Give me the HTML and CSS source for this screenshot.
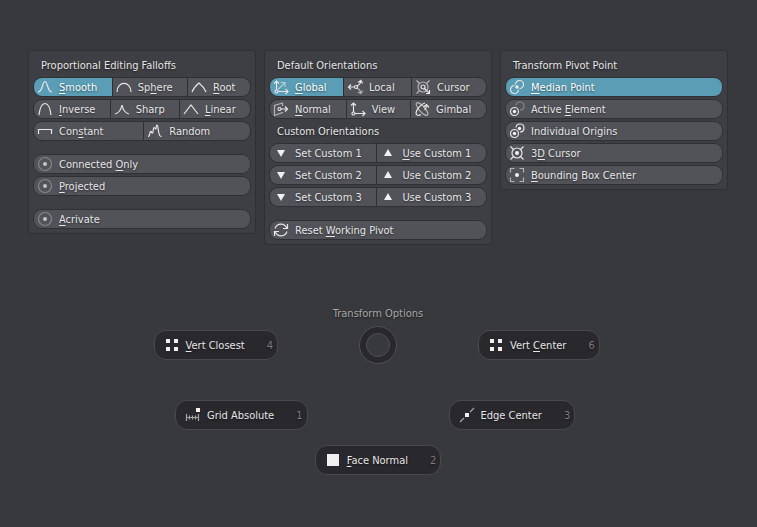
FILE: index.html
```html
<!DOCTYPE html>
<html lang="en">
<head>
    <meta charset="UTF-8">
    <meta name="viewport" content="width=device-width, initial-scale=1.0">
    <title>Transform Options</title>
    <link rel="stylesheet" href="styles.css">
</head>
<body>
    <main class="panels">
        <section class="panel">
            <h2>Proportional Editing Falloffs</h2>
            <div class="row">
                <button class="active"><svg class="icon" viewBox="0 0 16 16"><path d="M1 13C6 13 5 2.500 8 2.500S10 13 15 13"/></svg><span><u>S</u>mooth</span></button>
                <button><svg class="icon" viewBox="0 0 16 16"><path d="M1 13C1 1.500 15 1.500 15 13"/></svg><span>Sp<u>h</u>ere</span></button>
                <button><svg class="icon" viewBox="0 0 16 16"><path d="M1 13C2.500 9 5 6.500 8 4c3 2.500 5.500 5 7 9"/></svg><span><u>R</u>oot</span></button>
            </div>
            <div class="row">
                <button><svg class="icon" viewBox="0 0 16 16"><path d="M2 14C3 6 5 2.500 8 2.500s5 3.500 6 11.500"/></svg><span><u>I</u>nverse</span></button>
                <button><svg class="icon" viewBox="0 0 16 16"><path d="M1 13C5 12 7 9 8 4c1 5 3 8 7 9"/></svg><span>Sharp</span></button>
                <button><svg class="icon" viewBox="0 0 16 16"><path d="M1 13l7-9 7 9"/></svg><span><u>L</u>inear</span></button>
            </div>
            <div class="row">
                <button><svg class="icon" viewBox="0 0 16 16"><path d="M1.500 11V6.500h13V11"/></svg><span>Con<u>s</u>tant</span></button>
                <button><svg class="icon" viewBox="0 0 16 16"><path d="M1 13.500c2 0 1.500-4 2.500-5s1 2 2 1.500S6 4.500 7 4.500 8.500 7 9 5.500s0-3.500 1-3.500 1 3.500 1.500 6.500 1 5 3 5"/></svg><span>Random</span></button>
            </div>
            <div class="row spaced">
                <button><svg class="icon" viewBox="0 0 16 16"><circle class="dim" cx="8" cy="8" r="6.500"/><circle class="fill soft" cx="8" cy="8" r="2"/></svg><span>Connected <u>O</u>nly</span></button>
            </div>
            <div class="row">
                <button><svg class="icon" viewBox="0 0 16 16"><circle class="dim" cx="8" cy="8" r="6.500"/><circle class="fill soft" cx="8" cy="8" r="2"/></svg><span><u>P</u>rojected</span></button>
            </div>
            <div class="row spaced">
                <button><svg class="icon" viewBox="0 0 16 16"><circle class="dim" cx="8" cy="8" r="6.500"/><circle class="fill soft" cx="8" cy="8" r="2"/></svg><span><u>A</u>crivate</span></button>
            </div>
        </section>

        <section class="panel">
            <h2>Default Orientations</h2>
            <div class="row">
                <button class="active"><svg class="icon" viewBox="0 0 16 16"><path class="mid" d="M5 10.500L11.500 4M7.500 3.500H12V8"/><circle cx="3.500" cy="12.500" r="1.500"/><path d="M3.500 11V2M1 4.500L3.500 2 6 4.500M5 12.500h10M12.500 10l2.500 2.500-2.500 2.500"/></svg><span><u>G</u>lobal</span></button>
                <button><svg class="icon" viewBox="0 0 16 16"><path d="M7.500 8H1.500M4 5.500L1.500 8 4 10.500"/><circle cx="9" cy="8" r="1.500"/><path d="M10 7c2-1 3.500-2.500 4-5M11 3.500L14 1.500l1.500 3"/><path class="mid" d="M10 9c2 1 3.500 2.500 4 5M11 13l3 1.500 1.500-3"/></svg><span>Local</span></button>
                <button><svg class="icon" viewBox="0 0 16 16"><g class="mid"><circle cx="8" cy="8" r="5"/><path d="M1.500 1.500l3 3M14.500 1.500l-3 3M1.500 14.500l3-3"/></g><circle cx="8" cy="8" r="2"/><path d="M9.500 9.500l5 5M11 14.500h3.500V11"/></svg><span>Cursor</span></button>
            </div>
            <div class="row">
                <button><svg class="icon" viewBox="0 0 16 16"><path class="mid" d="M9.500 5V2L1.500 4.500v10l8-3V11"/><circle cx="6.500" cy="8" r="1.500"/><path d="M8 8h6.500M12 5.500L14.500 8 12 10.500"/></svg><span><u>N</u>ormal</span></button>
                <button><svg class="icon" viewBox="0 0 16 16"><circle cx="3.500" cy="12.500" r="1.500"/><path d="M3.500 11V2M1 4.500L3.500 2 6 4.500M5 12.500h10M12.500 10l2.500 2.500-2.500 2.500"/></svg><span>View</span></button>
                <button><svg class="icon" viewBox="0 0 16 16"><ellipse class="mid" cx="8" cy="8" rx="2.800" ry="8" transform="rotate(-42 8 8)"/><path d="M7 13.500C4.500 15 2 14.500 2 12 2 8.500 7 3 11 2"/><path d="M10.500 9c1.500-1.500 2-3 2-5M9.500 6l3-2.500 2.500 3"/></svg><span>Gimbal</span></button>
            </div>
            <h2>Custom Orientations</h2>
            <div class="row">
                <button><svg class="icon" viewBox="0 0 16 16"><path class="fill" d="M4 5h8l-4 7z"/></svg><span>Set Custom 1</span></button>
                <button><svg class="icon" viewBox="0 0 16 16"><path class="fill" d="M4 11h8L8 4z"/></svg><span><u>U</u>se Custom 1</span></button>
            </div>
            <div class="row">
                <button><svg class="icon" viewBox="0 0 16 16"><path class="fill" d="M4 5h8l-4 7z"/></svg><span>Set Custom 2</span></button>
                <button><svg class="icon" viewBox="0 0 16 16"><path class="fill" d="M4 11h8L8 4z"/></svg><span>Use Custom 2</span></button>
            </div>
            <div class="row">
                <button><svg class="icon" viewBox="0 0 16 16"><path class="fill" d="M4 5h8l-4 7z"/></svg><span>Set Custom 3</span></button>
                <button><svg class="icon" viewBox="0 0 16 16"><path class="fill" d="M4 11h8L8 4z"/></svg><span>Use Custom 3</span></button>
            </div>
            <div class="row spaced">
                <button><svg class="icon" viewBox="0 0 16 16"><path d="M2 6.500C4 1 11.500.500 14 6.500M14.500 2v4.500H10M14 9.500C12 15 4.500 15.500 2 9.500M1.500 14V9.500H6"/></svg><span>Reset <u>W</u>orking Pivot</span></button>
            </div>
        </section>

        <section class="panel">
            <h2>Transform Pivot Point</h2>
            <div class="row">
                <button class="active"><svg class="icon" viewBox="0 0 16 16"><path d="M6.500 5.500a4 4 0 1 1 4 4M9.500 10.500a4 4 0 1 1-4-4"/><circle class="fill" cx="8" cy="8" r="1.700"/></svg><span><u>M</u>edian Point</span></button>
            </div>
            <div class="row">
                <button><svg class="icon" viewBox="0 0 16 16"><path class="dim" d="M7 4.500a4 4 0 1 1 4 4.500"/><circle cx="5.500" cy="10.500" r="4"/><circle class="fill" cx="5.500" cy="10.500" r="1.700"/></svg><span>Active <u>E</u>lement</span></button>
            </div>
            <div class="row">
                <button><svg class="icon" viewBox="0 0 16 16"><path d="M7 4.500a4 4 0 1 1 4 4.500"/><circle cx="5.500" cy="10.500" r="4"/><circle class="fill" cx="5.500" cy="10.500" r="1.700"/><circle class="fill" cx="10.500" cy="5.500" r="1.700"/></svg><span>Individual Origins</span></button>
            </div>
            <div class="row">
                <button><svg class="icon" viewBox="0 0 16 16"><circle cx="8" cy="8" r="5"/><circle class="fill" cx="8" cy="8" r="2"/><path d="M1.500 1.500l3 3M14.500 1.500l-3 3M1.500 14.500l3-3M14.500 14.500l-3-3"/></svg><span>3<u>D</u> Cursor</span></button>
            </div>
            <div class="row">
                <button><svg class="icon" viewBox="0 0 16 16"><path class="mid" d="M5.500 1.500h-4v4M10.500 1.500h4v4M5.500 14.500h-4v-4M10.500 14.500h4v-4"/><circle class="fill" cx="8" cy="8" r="2"/></svg><span><u>B</u>ounding Box Center</span></button>
            </div>
        </section>
    </main>

    <nav class="pie">
        <h2>Transform Options</h2>
        <div class="pie-middle">
            <button><svg class="icon" viewBox="0 0 16 16"><path class="fill" d="M2 2h4v4H2zM10 2h4v4h-4zM2 10h4v4H2zM10 10h4v4h-4z"/></svg><span><u>V</u>ert Closest</span><kbd>4</kbd></button>
            <div class="ring"></div>
            <button><svg class="icon" viewBox="0 0 16 16"><path class="fill" d="M2 2h4v4H2zM10 2h4v4h-4zM2 10h4v4H2zM10 10h4v4h-4z"/></svg><span>Vert <u>C</u>enter</span><kbd>6</kbd></button>
        </div>
        <div class="pie-lower">
            <button><svg class="icon" viewBox="0 0 16 16"><path class="mid" d="M1.500 7v7M13.500 7v7M4.500 8.500v4M7.500 8.500v4M10.500 8.500v4M1.500 10.500h12"/><path class="fill" d="M11 1h4v4h-4z"/></svg><span>Grid Absolute</span><kbd>1</kbd></button>
            <button><svg class="icon" viewBox="0 0 16 16"><path class="mid" d="M1 15l4-4M11 5l4-4"/><path class="fill" d="M6 6h4v4H6z"/></svg><span>Edge Center</span><kbd>3</kbd></button>
        </div>
        <div class="pie-bottom">
            <button><svg class="icon" viewBox="0 0 16 16"><path class="fill" d="M2 2h12v12H2z"/></svg><span><u>F</u>ace Normal</span><kbd>2</kbd></button>
        </div>
    </nav>
</body>
</html>
```
FILE: styles.css
```css
* {
    box-sizing: border-box;
}
body {
    margin: 0;
    background-color: #38393c;
    color: #e6e6e6;
    font-family: "DejaVu Sans Condensed", "DejaVu Sans", sans-serif;
    font-size: 11px;
    line-height: 18px;
}
h2 {
    margin: 0;
    font-size: 11px;
    font-weight: normal;
    text-shadow: 0 1px 2px rgba(0, 0, 0, 0.6);
}
button {
    display: flex;
    align-items: center;
    margin: 0;
    color: inherit;
    font: inherit;
    text-align: left;
    white-space: nowrap;
    text-shadow: 0 1px 2px rgba(0, 0, 0, 0.5);
    cursor: pointer;
}
button span,
button kbd {
    padding-top: 1px;
}
u {
    text-decoration: underline 1px;
    text-decoration-skip-ink: none;
    text-underline-offset: 2px;
}

/* Panels */
.panels {
    display: grid;
    grid-template-columns: repeat(3, 1fr);
    align-items: start;
    gap: 8px;
    padding: 50px 29px 0 28px;
}
.panel {
    display: flex;
    flex-direction: column;
    gap: 2px;
    padding: 4px;
    border: 1px solid #2f3033;
    border-radius: 4px;
    background-color: #3e3f44;
}
.panel h2 {
    height: 20px;
    padding: 2px 8px 0;
}
.row {
    display: flex;
    height: 20px;
    border: 1px solid #2f3033;
    border-radius: 9px;
    overflow: hidden;
    background-color: #2f3033;
    gap: 1px;
}
.spaced {
    margin-top: 11px;
}
.row button {
    flex: 1 1 auto;
    gap: 6px;
    padding: 0 3px;
    border: none;
    background-color: #525359;
}
.row button.active {
    background-color: #5a9db4;
    color: #fff;
}
.row button:hover {
    background-color: #5e5f66;
}
.row button.active:hover {
    background-color: #66a9c0;
}

/* Icons */
.icon {
    flex: none;
    width: 16px;
    height: 16px;
    fill: none;
    stroke: #e6e6e6;
    stroke-width: 1.2;
}
.icon .mid {
    opacity: 0.65;
}
.icon .dim {
    opacity: 0.35;
}
.icon .fill {
    fill: #f0f0f0;
    stroke: none;
}
.icon .soft {
    fill: #c4c4c6;
}

/* Pie menu */
.pie {
    display: flex;
    flex-direction: column;
    margin-top: 60px;
    padding-right: 1px;
}
.pie h2 {
    height: 21px;
    color: #a9a9ab;
    text-align: center;
}
.pie-middle {
    display: grid;
    grid-template-columns: 1fr 38px 1fr;
    align-items: center;
    column-gap: 81px;
}
.pie-lower {
    display: grid;
    grid-template-columns: 1fr 1fr;
    column-gap: 141px;
    margin-top: 36px;
}
.pie-middle button:first-child,
.pie-lower button:first-child {
    justify-self: end;
}
.pie-middle button:last-child,
.pie-lower button:last-child {
    justify-self: start;
}
.pie-bottom {
    display: flex;
    justify-content: center;
    margin-top: 15px;
}
.pie button {
    gap: 6px;
    height: 30px;
    padding: 0 4px 0 9px;
    border: 1px solid #4a4a4c;
    border-radius: 12px;
    background-color: #29282d;
}
.pie button:hover {
    background-color: #35343a;
}
.pie kbd {
    margin-left: 16px;
    color: #7b7b7e;
    font-family: inherit;
    font-size: 11px;
}
.ring {
    width: 38px;
    height: 38px;
    padding: 6px;
    border: 1px solid #505052;
    border-radius: 50%;
    background-color: #29282d;
}
.ring::before {
    content: "";
    display: block;
    height: 22px;
    border: 1px solid #505052;
    border-radius: 50%;
    background-color: #38393c;
}
```
